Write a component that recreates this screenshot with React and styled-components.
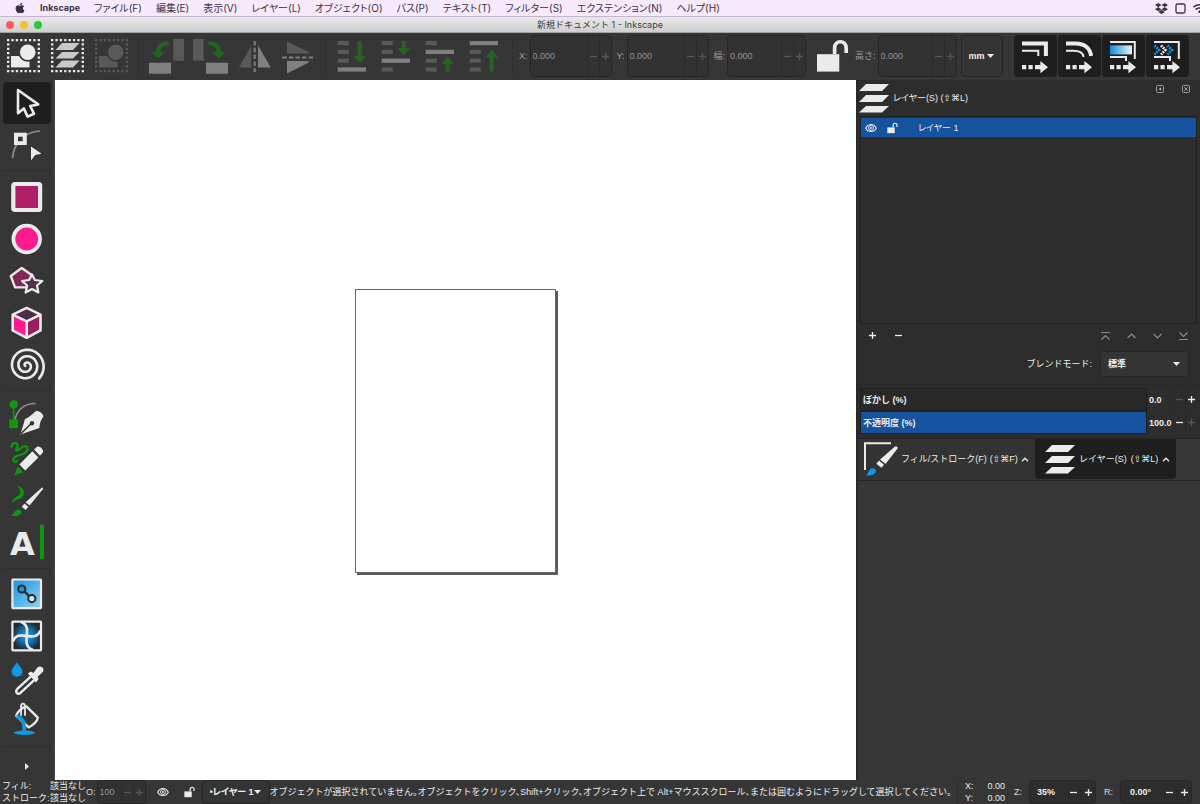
import React, { useState } from 'react'
import styled, { createGlobalStyle } from 'styled-components'
import { FaApple, FaDropbox, FaWifi } from 'react-icons/fa'

const LIGHT = '#ebebeb'
const DIM = '#595959'
const MID = '#808080'
const GREEN = '#0c980f'
const DARK_GREEN = '#24641f'
const PINK = '#ff1b8d'
const BLUE = '#0d99e8'

const GlobalStyle = createGlobalStyle`
  * {
    box-sizing: border-box;
  }

  body {
    margin: 0;
    background: #363636;
    color: #ececec;
    font-family: 'Liberation Sans', 'Noto Sans CJK JP', sans-serif;
    font-size: 9px;
    line-height: 12px;
  }

  button, input, select {
    margin: 0;
    padding: 0;
    border: 0;
    background: none;
    color: inherit;
    font: inherit;
    font-feature-settings: inherit;
  }

  svg {
    display: block;
    flex: none;
    overflow: visible;
  }
`

const Window = styled.div`
  display: flex;
  flex-direction: column;
  min-height: 100vh;
  overflow: hidden;
`

const MenuBar = styled.nav`
  display: flex;
  align-items: center;
  gap: 14px;
  height: 17px;
  padding-left: 14px;
  background: #f7eafd;
  border-bottom: 1px solid #c5b3cf;
  color: #3c3246;
  font-family: Inter, 'Noto Sans CJK JP', sans-serif;
  font-feature-settings: 'palt';
  overflow: hidden;
`

const MenuItem = styled.button`
  font-size: ${({ $app }) => ($app ? '9px' : '10px')};
  font-weight: ${({ $app }) => ($app ? 700 : 400)};
  white-space: nowrap;
`

const MenuExtras = styled.div`
  display: flex;
  align-items: center;
  gap: 7px;
  margin-left: auto;
  margin-right: -6px;
`

const TitleBar = styled.header`
  display: grid;
  grid-template-columns: 1fr auto 1fr;
  align-items: center;
  height: 16px;
  padding: 0 6px;
  background: linear-gradient(#e9e9e9, #cfcfcf);
  border-bottom: 1px solid #a3a3a3;
  color: #404040;
  font-family: Inter, 'Noto Sans CJK JP', sans-serif;
`

const Title = styled.h1`
  margin: 0;
  font-size: 9px;
  font-weight: 400;
`

const Lights = styled.div`
  display: flex;
  gap: 6px;
`

const Light = styled.button`
  width: 8px;
  height: 8px;
  border-radius: 50%;
  background: ${({ $color }) => $color};
`

const Toolbar = styled.div`
  display: flex;
  align-items: center;
  height: 47px;
  padding: 0 0 1px 1px;
  background: #363636;
`

const ToolbarButton = styled.button`
  display: grid;
  place-items: center;
  flex: none;
  width: ${({ $width }) => $width || 44}px;
  height: 42px;
`

const AffectButton = styled(ToolbarButton)`
  width: 43px;
  margin-right: 1px;
  border-radius: 4px;
  background: #1e1e1e;
`

const ToolbarDivider = styled.span`
  flex: none;
  width: 1px;
  height: 40px;
  margin: 0 5px;
  background: #303030;
`

const Field = styled.label`
  display: flex;
  align-items: center;
  gap: 2px;
  margin-left: ${({ $gap = 5 }) => $gap}px;
  color: #9a9a9a;
  white-space: nowrap;
`

const SpinBox = styled.span`
  display: flex;
  align-items: center;
  width: ${({ $width }) => $width}px;
  height: ${({ $low }) => ($low ? '24px' : '42px')};
  border: 1px solid #272727;
  border-radius: 4px;
  background: ${({ $disabled }) => ($disabled ? '#323232' : '#2d2d2d')};
  color: ${({ $disabled }) => ($disabled ? '#949494' : '#f0f0f0')};
  font-weight: ${({ $disabled }) => ($disabled ? 400 : 700)};
`

const SpinInput = styled.input`
  flex: 1;
  min-width: 0;
  padding-left: ${({ $indent }) => $indent || 2}px;
`

const Step = styled.button`
  display: grid;
  place-items: center;
  align-self: stretch;
  flex: none;
  width: ${({ $width }) => $width || 12}px;
  border-left: 1px solid #2b2b2b;
  color: ${({ $off }) => ($off ? '#565656' : '#ececec')};
`

const SelectBox = styled.span`
  display: grid;
  align-items: center;
  flex: none;
  width: ${({ $width }) => $width}px;
  height: ${({ $height }) => $height}px;
  border: 1px solid #252525;
  border-radius: 4px;
  background: #343434;
  color: #f0f0f0;

  select {
    grid-area: 1 / 1;
    width: 100%;
    height: 100%;
    padding-left: 7px;
    appearance: none;
    font-weight: 700;
    font-feature-settings: 'palt';
  }

  svg {
    grid-area: 1 / 1;
    justify-self: end;
    margin-right: 8px;
    pointer-events: none;
  }
`

const Workspace = styled.div`
  display: flex;
  flex: 1;
`

const Toolbox = styled.aside`
  display: flex;
  flex-direction: column;
  align-items: center;
  flex: none;
  width: 55px;
  padding: 2px 1px 0 0;
  border-right: 1px solid #4a4a4a;
`

const Tool = styled.button`
  display: grid;
  place-items: center;
  width: 48px;
  height: 42px;
  border-radius: 4px;
  background: ${({ $active }) => ($active ? '#1e1e1e' : 'none')};
`

const ToolDivider = styled.span`
  width: 48px;
  height: 1px;
  margin: 4px 0 5px;
  background: #2f2f2f;
`

const MoreButton = styled.button`
  display: grid;
  place-items: center;
  width: 48px;
  height: 28px;
`

const Canvas = styled.main`
  display: grid;
  place-items: center;
  flex: 1;
  min-height: 700px;
  padding-top: 2px;
  background: #fff;
`

const Paper = styled.div`
  width: 201px;
  aspect-ratio: 201 / 284;
  border: 1px solid #666;
  background: #fff;
  box-shadow: 2px 2px 0 #5c5c5c;
`

const Dock = styled.aside`
  flex: none;
  width: 344px;
  border-left: 2px solid #292929;
`

const DockPanel = styled.section`
  background: #2d2d2d;
  border-bottom: 1px solid #262626;
`

const DockHeader = styled.header`
  display: flex;
  align-items: center;
  gap: 4px;
  height: 36px;
  padding: 0 10px 0 1px;
`

const DockTitle = styled.h2`
  flex: 1;
  margin: 0;
  font-size: 9px;
  font-weight: 400;
  font-feature-settings: 'palt';
`

const HeaderButtons = styled.div`
  display: flex;
  align-self: flex-start;
  gap: 18px;
  padding-top: 5px;
`

const LayerList = styled.ul`
  height: 208px;
  margin: 0 3px 0 2px;
  padding: 1px 0;
  border: 1px solid #222;
  list-style: none;
`

const LayerRow = styled.li`
  display: flex;
  align-items: center;
  height: 19px;
  padding-left: 4px;
  background: #15539e;
`

const LayerName = styled.span`
  margin-left: 11px;
  font-feature-settings: 'palt';
`

const IconButton = styled.button`
  display: grid;
  place-items: center;
  width: ${({ $width }) => $width || 26}px;
  height: 22px;
`

const ActionRow = styled.div`
  display: flex;
  align-items: center;
  height: 23px;
  padding: 0 4px 0 1px;
`

const Spacer = styled.span`
  flex: 1;
`

const BlendRow = styled.label`
  display: flex;
  align-items: center;
  justify-content: flex-end;
  gap: 8px;
  height: 34px;
  padding-right: 11px;
`

const Scales = styled.div`
  margin-top: 3px;
  padding: 3px 3px 4px 2px;
  border-top: 1px solid #292929;
  font-weight: 700;
`

const ScaleRow = styled.div`
  display: flex;
  align-items: center;
  height: 23px;
`

const ScaleTrack = styled.label`
  display: flex;
  align-items: center;
  flex: 1;
  height: 23px;
  padding-left: 2px;
  border: 1px solid #202020;
  background: ${({ $full }) => ($full ? '#15539e' : '#282828')};
`

const ScaleValue = styled.input`
  width: 26px;
  padding-left: 2px;
`

const Tabs = styled.div`
  display: flex;
  height: 42px;
  border-bottom: 1px solid #262626;
`

const Tab = styled.button`
  display: flex;
  align-items: center;
  gap: ${({ $active }) => ($active ? 4 : 3)}px;
  width: ${({ $active }) => ($active ? 141 : 177)}px;
  height: 40px;
  padding-left: ${({ $active }) => ($active ? 10 : 6)}px;
  border-radius: 0 0 4px 4px;
  background: ${({ $active }) => ($active ? '#1e1e1e' : '#333')};
  white-space: nowrap;
`

const StatusBar = styled.footer`
  display: flex;
  align-items: center;
  height: 24px;
  padding-right: 8px;
  white-space: nowrap;
`

const StyleTable = styled.dl`
  display: grid;
  grid-template-columns: 48px 36px;
  flex: none;
  margin: 0;
  padding-left: 2px;

  dt, dd {
    margin: 0;
  }
`

const Message = styled.output`
  flex: 1;
  min-width: 0;
  overflow: hidden;
  font-feature-settings: 'halt';
`

const Coordinates = styled.dl`
  display: grid;
  grid-template-columns: 14px 26px;
  flex: none;
  margin: 0 9px 0 0;
  padding-left: 7px;
  border-left: 1px solid #2c2c2c;

  dt, dd {
    margin: 0;
  }

  dd {
    text-align: right;
  }
`

const StatusField = styled.label`
  display: flex;
  align-items: center;
  flex: none;
  gap: ${({ $tight }) => ($tight ? 1 : 7)}px;
  margin-right: ${({ $tight }) => ($tight ? 4 : 8)}px;
  color: #dcdcdc;

  &:last-child {
    margin-right: 0;
  }
`

const Keys = styled.kbd`
  font-family: 'Liberation Sans', 'DejaVu Sans', sans-serif;
  font-size: 9px;
`

const Icon = ({ size = 36, children }) => (
  <svg width={size} height={size} viewBox="0 0 36 36" fill="none" aria-hidden="true">{children}</svg>
)

const Minus = () => (
  <svg width="9" height="9" viewBox="0 0 9 9" stroke="currentColor" strokeWidth="1.3"><path d="M1 4.5H8" /></svg>
)

const Plus = () => (
  <svg width="9" height="9" viewBox="0 0 9 9" stroke="currentColor" strokeWidth="1.3"><path d="M1 4.5H8M4.5 1V8" /></svg>
)

const Caret = () => (
  <svg width="7" height="4" viewBox="0 0 7 4" fill="#ececec"><path d="M0 0H7L3.5 4Z" /></svg>
)

const Chevron = () => (
  <svg width="8" height="5" viewBox="0 0 8 5" fill="none" stroke="#ececec" strokeWidth="1.3"><path d="M1 4.2L4 1.2L7 4.2" /></svg>
)

// dotted frame shared by the three select-all buttons
const Dots = ({ color }) => (
  <path d="M2 2.2H35M2 33.2H35M3.2 5.3V31M33.8 5.3V31" stroke={color} strokeWidth="2.3" strokeDasharray="2.3 2.08" />
)

const SelectAllIcon = ({ color = LIGHT }) => (
  <Icon>
    <Dots color={color} />
    <path d="M6 18H24.5V29.4H6Z" fill={color} />
    <circle cx="22.7" cy="14.3" r="9.4" fill="#363636" />
    <circle cx="22.7" cy="14.3" r="7.8" fill={color} />
  </Icon>
)

const SelectLayersIcon = () => (
  <Icon>
    <Dots color={LIGHT} />
    <path d="M13 5H30.5L24 12H6.5ZM13 14H30.5L24 20.6H6.5ZM13 22.6H30.5L24 29.4H6.5Z" fill="#c9c9c9" />
  </Icon>
)

const RotateIcon = ({ flip }) => (
  <Icon>
    <g transform={flip ? 'translate(37 0) scale(-1 1)' : undefined}>
      <path d="M25.3 1H36V22.7H25.3Z" fill={DIM} />
      <path d="M1 24.7H23V35.7H1Z" fill={MID} />
      <path d="M21 3.2C13 3 7.5 7 8 14H3.8L10.2 20.4L17 14H12.4C12.4 9.5 15.5 7.2 21 7Z" fill={DARK_GREEN} />
    </g>
  </Icon>
)

const FlipHorizontalIcon = () => (
  <Icon>
    <path d="M3 29.5H15.4V7.6Z" fill={DIM} />
    <path d="M22 29.5H34.8L22 7.6Z" fill={MID} />
    <path d="M18.7 3V34" stroke={MID} strokeWidth="2" strokeDasharray="4.4 2.4" />
  </Icon>
)

const FlipVerticalIcon = () => (
  <Icon>
    <path d="M7 3.4L28.8 14V15.6H7Z" fill={DIM} />
    <path d="M7 23H28.8V24.4L7 35.4Z" fill={MID} />
    <path d="M2.3 19.4H33.5" stroke={MID} strokeWidth="2" strokeDasharray="4.4 2.2" />
  </Icon>
)

// four stacked bars, one of them full width, and the arrow that points to it
const StackIcon = ({ row, arrow }) => (
  <Icon>
    {[0, 1, 2, 3].map((i) => (
      <rect key={i} x="2.7" y={3 + i * 8.8} width={i === row ? 28.3 : 11} height="4.2" fill={i === row ? MID : DIM} />
    ))}
    <path d={arrow} fill={DARK_GREEN} />
  </Icon>
)

const Padlock = ({ size = 36 }) => (
  <Icon size={size}>
    <path d="M4 16.2H26.3V33.6H4Z" fill={LIGHT} />
    <path d="M21.6 16V10.2C21.6 1.6 33.2 1.6 33.2 10.2V15" stroke={LIGHT} strokeWidth="3.7" />
  </Icon>
)

const MoveArrow = () => (
  <path d="M5 27H9.2V31.2H5ZM11.5 27H15.7V31.2H11.5ZM18 27H23.4V23L31 29.2L23.4 35.2V31.2H18Z" fill={LIGHT} />
)

const ScaleStrokeIcon = () => (
  <Icon>
    <path d="M5 5.4H28.9V18" stroke={LIGHT} strokeWidth="4" />
    <path d="M5 12.7H21.3V18" stroke={LIGHT} strokeWidth="2" />
    <MoveArrow />
  </Icon>
)

const ScaleCornersIcon = () => (
  <Icon>
    <path d="M5 5.4H15C23 5.4 29.4 10 30 18" stroke={LIGHT} strokeWidth="4" />
    <path d="M5 12.7H12C18 12.7 22.2 14.5 22.6 19" stroke={LIGHT} strokeWidth="2" />
    <MoveArrow />
  </Icon>
)

const MoveGradientIcon = () => (
  <Icon>
    <defs>
      <linearGradient id="moveGradient"><stop stopColor="#0a8fe0" /><stop offset="1" stopColor="#f2f2f2" /></linearGradient>
    </defs>
    <path d="M5 4H29.8V21" stroke={LIGHT} strokeWidth="2" />
    <path d="M5 7.4H27V16.4H5Z" fill="url(#moveGradient)" />
    <path d="M5 19H21V23" stroke={LIGHT} strokeWidth="2" />
    <MoveArrow />
  </Icon>
)

const MovePatternIcon = () => (
  <Icon>
    <path d="M5 4H29.8V21" stroke={LIGHT} strokeWidth="2" />
    <path d="M5.5 7.5L10 12L5.5 16.5M18.5 7.5L23 12L18.5 16.5" stroke={BLUE} strokeWidth="2.6" strokeDasharray="1.8 1" />
    <path d="M12 7.5L16.5 12L12 16.5" stroke={LIGHT} strokeWidth="2.6" strokeDasharray="1.8 1" />
    <path d="M5 19H21V23" stroke={LIGHT} strokeWidth="2" />
    <MoveArrow />
  </Icon>
)

const LayersIcon = () => (
  <svg width="30" height="30" viewBox="0 0 30 30" fill={LIGHT} aria-hidden="true">
    <path d="M7 1H30L23 8H0ZM7 12H30L23 19H0ZM7 23H30L23 29.5H0Z" />
  </svg>
)

const FillStrokeIcon = () => (
  <svg width="34" height="34" viewBox="0 0 34 34" fill="none" aria-hidden="true">
    <path d="M1 28V1.2H27" stroke={LIGHT} strokeWidth="2" />
    <path d="M32.5 4.5C34 5 34 6 33.2 7L21.5 22L16 17.5L31 4.6Z" fill={LIGHT} />
    <path d="M15 18.5L20 22.8L17.4 25.8L12.4 21.8Z" fill={LIGHT} />
    <path d="M2 33.5C4.5 31.5 4.5 26.5 8.5 26.2C12 26.2 13 29.5 10.7 31.6C8.5 33.6 5 33.8 2 33.5Z" fill={BLUE} />
  </svg>
)

const Eye = () => (
  <svg width="12" height="12" viewBox="0 0 12 12" fill="none" stroke={LIGHT} aria-hidden="true">
    <path d="M0.7 6.2C3 1.2 9 1.2 11.3 6.2C9 10.6 3 10.6 0.7 6.2Z" strokeWidth="1.1" />
    <circle cx="6" cy="6" r="2.4" strokeWidth="1" />
    <circle cx="6" cy="6" r="0.9" fill={LIGHT} stroke="none" />
  </svg>
)

const ArrowTool = () => (
  <Icon><path d="M9 5V28.3L14.8 23.4L18.6 31.6L25 28.8L21.2 21L29.2 19.4Z" stroke={LIGHT} strokeWidth="2.6" strokeLinejoin="round" /></Icon>
)

const NodeTool = () => (
  <Icon>
    <path d="M31 4C17 5 5 14 3.5 31" stroke="#8c8c8c" strokeWidth="1.7" />
    <path d="M5 5.7H17.8V18H5Z" fill={LIGHT} />
    <path d="M9 9.7H13.7V14.2H9Z" fill="#363636" />
    <path d="M22 19.5L32.5 26.8L26.2 28L22 33.6Z" fill={LIGHT} />
  </Icon>
)

const RectTool = () => (
  <Icon><rect x="4.3" y="5" width="26.8" height="26" rx="1.5" fill="#ad2068" stroke={LIGHT} strokeWidth="4.2" /></Icon>
)

const EllipseTool = () => (
  <Icon><circle cx="17.7" cy="18" r="13.3" fill={PINK} stroke={LIGHT} strokeWidth="3.8" /></Icon>
)

const StarTool = () => (
  <Icon>
    <path d="M12.7 5L23 12.3L19.5 24.3H6L1.8 13Z" fill="#84255a" stroke={LIGHT} strokeWidth="2.3" strokeLinejoin="round" />
    <path d="M23 11.4L25.9 17L33.4 18L28 22.5L29.4 29.5L23 26L16.6 29.5L18.2 22.5L13 18L20.1 17Z" fill="#56304a" stroke={LIGHT} strokeWidth="2.2" strokeLinejoin="round" />
  </Icon>
)

const BoxTool = () => (
  <Icon>
    <path d="M17.7 2.8L31.5 9.6L17.7 16.4L3.7 9.6Z" fill="#4d2c45" />
    <path d="M3.7 9.6L17.7 16.4V32.8L3.7 25.4Z" fill={PINK} />
    <path d="M31.5 9.6L17.7 16.4V32.8L31.5 25.4Z" fill="#9a2160" />
    <path d="M17.7 2.8L31.5 9.6V25.4L17.7 32.8L3.7 25.4V9.6ZM3.7 9.6L17.7 16.4L31.5 9.6M17.7 16.4V32.8" stroke={LIGHT} strokeWidth="2.6" strokeLinejoin="round" />
  </Icon>
)

const spiralPath = () => {
  const start = Math.PI * 0.9
  const end = Math.PI * 6.25
  const points = []
  for (let a = start; a <= end; a += 0.12) {
    const r = 1 + (17.2 * (a - start)) / (end - start)
    points.push(`${(17.2 + r * Math.cos(a)).toFixed(2)} ${(18.6 + r * Math.sin(a)).toFixed(2)}`)
  }
  return `M${points.join('L')}`
}

const SpiralTool = () => (
  <Icon><path d={spiralPath()} stroke={LIGHT} strokeWidth="2.6" strokeLinecap="round" strokeLinejoin="round" /></Icon>
)

const PenTool = () => (
  <Icon>
    <path d="M26.5 4.5C15 4.5 8 11 5.5 22" stroke="#8c8c8c" strokeWidth="1.7" />
    <path d="M4.7 5V24" stroke={GREEN} strokeWidth="1.7" />
    <circle cx="4.7" cy="5.4" r="4.1" fill={GREEN} />
    <path d="M0.3 20.4H9V29.2H0.3Z" fill={GREEN} />
    <path d="M11.4 35.4L16 20C19.5 18.8 23 16 26 12.8L27.6 12C30.5 12 34 14.5 34.4 17.3L33 19.8C31 23 30.6 26 30.4 29Z" fill={LIGHT} />
    <path d="M12 34.6L22 24.8" stroke="#363636" strokeWidth="1.5" />
    <circle cx="23" cy="24.2" r="2.2" fill="#363636" />
  </Icon>
)

const PencilTool = () => (
  <Icon>
    <path d="M2.5 6C2.5 1 10 1 8.5 5.5C7.5 8 6 9.5 8 9.5C11 9 13 4.5 17 5.5C21 7 17 12 13 13.5C9 15 5.5 14.5 4.5 18C4 21 6.5 21.4 8 20" stroke={GREEN} strokeWidth="2.3" strokeLinecap="round" />
    <path d="M10.4 23.4L23.4 10.2L29.4 16.4L16.2 29.4Z" fill={LIGHT} />
    <path d="M25 8.6L28 5.8C30.5 4.4 35.4 8.8 33.8 11.8L31 14.8Z" fill={LIGHT} />
    <path d="M8.6 25.4L14.4 31.2L5.4 34.2Z" fill={GREEN} />
  </Icon>
)

const BrushTool = () => (
  <Icon>
    <path d="M8 2.4C14.5 3.4 17 10.4 13 14.2C10 17 5.5 16 3.2 20.6C2.8 16.2 6.4 14.6 9.4 12.6C12.6 10.2 11.8 5.6 8 2.4Z" fill={GREEN} />
    <path d="M33 4.6C34.2 4.6 34.2 5.8 33.6 6.6L20.6 22.6L16.6 19.2Z" fill={LIGHT} />
    <path d="M15.4 20.4L19.4 23.8L16.6 27L12.8 23.8Z" fill={LIGHT} />
    <path d="M2.4 32.8C5 31.6 5.4 27.2 9 26.8C12.4 26.6 13.6 29.4 11.4 31.2C9 33 6 33.2 2.4 32.8Z" fill={GREEN} />
  </Icon>
)

const TextTool = () => (
  <Icon>
    <text x="1" y="30" fill={LIGHT} fontFamily="DejaVu Sans" fontWeight="700" fontSize="32">A</text>
    <path d="M31 0H35V34H31Z" fill={GREEN} />
  </Icon>
)

const GradientTool = () => (
  <Icon>
    <defs>
      <linearGradient id="toolGradient" x1="0" y1="0" x2="1" y2="1"><stop stopColor="#1494e4" /><stop offset="1" stopColor="#98cff2" /></linearGradient>
    </defs>
    <rect x="3.4" y="2.5" width="28.6" height="28.6" rx="0.5" fill="url(#toolGradient)" stroke={LIGHT} strokeWidth="2.2" />
    <path d="M14 13L22 21" stroke="#2b2b2b" strokeWidth="2.4" />
    <circle cx="12.8" cy="12" r="3.6" fill="#2b8fce" stroke="#2b2b2b" strokeWidth="2" />
    <circle cx="22.8" cy="21.6" r="3.6" fill="#cfe6f5" stroke="#2b2b2b" strokeWidth="2" />
  </Icon>
)

const MeshTool = () => (
  <Icon>
    <defs>
      <radialGradient id="meshGradient"><stop stopColor="#1d9df0" /><stop offset="0.5" stopColor="#1672b0" /><stop offset="1" stopColor="#222a30" /></radialGradient>
    </defs>
    <rect x="3.4" y="2.7" width="28.6" height="28.6" rx="0.5" fill="url(#meshGradient)" stroke={LIGHT} strokeWidth="2.2" />
    <path d="M12 3C20 6 18 13 17.7 17C17.4 21 16 28 24 31M4 22.5C7 14.5 13 16.6 17.7 17C22.4 17.4 28.5 19 31.5 11.5" stroke={LIGHT} strokeWidth="2.6" />
  </Icon>
)

const DropperTool = () => (
  <Icon>
    <path d="M8 1C9.6 4.4 13.4 7 13.4 10.6C13.4 17.4 2.6 17.4 2.6 10.6C2.6 7 6.4 4.4 8 1Z" fill={BLUE} />
    <path d="M22 15.4L8.6 27.6C5 31.4 9 34.6 12 31.4L25.4 18.8" stroke={LIGHT} strokeWidth="2.4" />
    <path d="M18.8 12.6L22 10.4L24.4 12L28.4 6.6C31.5 3.4 36.4 7.4 33.8 11L28.6 15.8L29.6 18L27 21.4Z" fill={LIGHT} />
  </Icon>
)

const BucketTool = () => (
  <Icon>
    <ellipse cx="15.4" cy="29.8" rx="10.6" ry="2.2" fill={BLUE} />
    <path d="M17.4 3.4L28.8 14.6C28.6 18 24 22.4 19.6 24.4L7.2 12.6C8.6 8.6 13 4.4 17.4 3.4Z" stroke={LIGHT} strokeWidth="2.3" strokeLinejoin="round" />
    <path d="M12 12V3.6C12 -0.6 16 0.2 16 3.2V12" stroke={LIGHT} strokeWidth="1.8" strokeLinecap="round" />
    <path d="M7.4 13.6C13 14.4 15.4 18 15.4 29" stroke={BLUE} strokeWidth="3.6" />
  </Icon>
)

const menus = ['ファイル(F)', '編集(E)', '表示(V)', 'レイヤー(L)', 'オブジェクト(O)', 'パス(P)', 'テキスト(T)', 'フィルター(S)', 'エクステンション(N)', 'ヘルプ(H)']

const toolGroups = [
  [['選択', ArrowTool], ['ノード', NodeTool]],
  [['矩形', RectTool], ['円/弧', EllipseTool], ['星形', StarTool], ['3D ボックス', BoxTool], ['らせん', SpiralTool]],
  [['ペン', PenTool], ['鉛筆', PencilTool], ['カリグラフィ', BrushTool], ['テキスト', TextTool]],
  [['グラデーション', GradientTool], ['メッシュ', MeshTool], ['スポイト', DropperTool], ['バケツ', BucketTool]],
]

const SpinField = ({ label, width, gap }) => (
  <Field $gap={gap}>
    {label}
    <SpinBox $width={width} $disabled>
      <SpinInput defaultValue="0.000" disabled />
      <Step $off aria-label="減らす"><Minus /></Step>
      <Step $off aria-label="増やす"><Plus /></Step>
    </SpinBox>
  </Field>
)

const Scale = ({ id, label, value, full }) => (
  <ScaleRow>
    <ScaleTrack htmlFor={id} $full={full}>{label}</ScaleTrack>
    <ScaleValue id={id} defaultValue={value} />
    <Step $off={!full} aria-label="減らす"><Minus /></Step>
    <Step $off={full} aria-label="増やす"><Plus /></Step>
  </ScaleRow>
)

const orderPaths = ['M1 1.5H10M1.5 8.5L5.5 4.5L9.5 8.5', 'M1.5 7L5.5 3L9.5 7', 'M1.5 3L5.5 7L9.5 3', 'M1 8.5H10M1.5 1.5L5.5 5.5L9.5 1.5']
const orderLabels = ['最前面へ', '前面へ', '背面へ', '最背面へ']

const LayersDock = () => (
  <Dock>
    <DockPanel>
      <DockHeader>
        <LayersIcon />
        <DockTitle>レイヤー(S) <Keys>(⇧⌘L)</Keys></DockTitle>
        <HeaderButtons>
          <button aria-label="アイコン化">
            <svg width="8" height="8" viewBox="0 0 8 8" fill="none" stroke="#9c9c9c"><rect x="0.5" y="0.5" width="7" height="7" rx="1" /><path d="M5 2.4V5.6L2.6 4Z" fill="#c4c4c4" stroke="none" /></svg>
          </button>
          <button aria-label="閉じる">
            <svg width="8" height="8" viewBox="0 0 8 8" fill="none" stroke="#9c9c9c"><rect x="0.5" y="0.5" width="7" height="7" rx="1" /><path d="M2.2 2.2L5.8 5.8M5.8 2.2L2.2 5.8" /></svg>
          </button>
        </HeaderButtons>
      </DockHeader>
      <LayerList>
        <LayerRow>
          <IconButton $width={12} aria-label="表示"><Eye /></IconButton>
          <IconButton $width={30} aria-label="ロック"><Padlock size={12} /></IconButton>
          <LayerName>レイヤー 1</LayerName>
        </LayerRow>
      </LayerList>
      <ActionRow>
        <IconButton aria-label="レイヤーを追加"><Plus /></IconButton>
        <IconButton aria-label="レイヤーを削除"><Minus /></IconButton>
        <Spacer />
        {orderPaths.map((d, i) => (
          <IconButton key={d} aria-label={orderLabels[i]}>
            <svg width="11" height="10" viewBox="0 0 11 10" fill="none" stroke="#8a8a8a" strokeWidth="1.2"><path d={d} /></svg>
          </IconButton>
        ))}
      </ActionRow>
      <BlendRow>
        ブレンドモード:
        <SelectBox $width={89} $height={26}>
          <select><option>標準</option></select>
          <Caret />
        </SelectBox>
      </BlendRow>
      <Scales>
        <Scale id="blur" label="ぼかし (%)" value="0.0" />
        <Scale id="opacity" label="不透明度 (%)" value="100.0" full />
      </Scales>
    </DockPanel>
    <Tabs>
      <Tab><FillStrokeIcon />フィル/ストローク(F) <Keys>(⇧⌘F)</Keys><Chevron /></Tab>
      <Tab $active><LayersIcon />レイヤー(S) <Keys>(⇧⌘L)</Keys><Chevron /></Tab>
    </Tabs>
  </Dock>
)

const App = () => {
  const [tool, setTool] = useState('選択')

  return (
    <Window>
      <GlobalStyle />
      <MenuBar>
        <FaApple size={12} />
        <MenuItem $app>Inkscape</MenuItem>
        {menus.map((name) => <MenuItem key={name}>{name}</MenuItem>)}
        <MenuExtras>
          <FaDropbox size={13} />
          <svg width="11" height="11" viewBox="0 0 11 11" fill="none" stroke="currentColor" strokeWidth="1.3"><rect x="1" y="1" width="9" height="9" rx="1.5" /></svg>
          <FaWifi size={13} />
        </MenuExtras>
      </MenuBar>
      <TitleBar>
        <Lights>
          <Light $color="#fc5b57" aria-label="閉じる" />
          <Light $color="#fdbc2f" aria-label="最小化" />
          <Light $color="#2ac840" aria-label="最大化" />
        </Lights>
        <Title>新規ドキュメント 1 - Inkscape</Title>
      </TitleBar>

      <Toolbar>
        <ToolbarButton aria-label="すべて選択"><SelectAllIcon /></ToolbarButton>
        <ToolbarButton aria-label="すべてのレイヤーで選択"><SelectLayersIcon /></ToolbarButton>
        <ToolbarButton aria-label="選択解除"><SelectAllIcon color={DIM} /></ToolbarButton>
        <ToolbarDivider />
        <ToolbarButton aria-label="反時計回りに回転"><RotateIcon /></ToolbarButton>
        <ToolbarButton aria-label="時計回りに回転"><RotateIcon flip /></ToolbarButton>
        <ToolbarButton aria-label="水平に反転"><FlipHorizontalIcon /></ToolbarButton>
        <ToolbarButton aria-label="垂直に反転"><FlipVerticalIcon /></ToolbarButton>
        <ToolbarDivider />
        <ToolbarButton aria-label="最背面へ"><StackIcon row={3} arrow="M22.6 3H26.8V18H31.2L24.7 25L18.2 18H22.6Z" /></ToolbarButton>
        <ToolbarButton aria-label="背面へ"><StackIcon row={2} arrow="M22.6 3H26.8V10H31.2L24.7 17.4L18.2 10H22.6Z" /></ToolbarButton>
        <ToolbarButton aria-label="前面へ"><StackIcon row={1} arrow="M22.6 33.6H26.8V26H31.2L24.7 18.6L18.2 26H22.6Z" /></ToolbarButton>
        <ToolbarButton aria-label="最前面へ"><StackIcon row={0} arrow="M22.6 33.6H26.8V19.6H31.2L24.7 12L18.2 19.6H22.6Z" /></ToolbarButton>
        <ToolbarDivider />
        <SpinField label="X:" width={82} gap={1} />
        <SpinField label="Y:" width={82} />
        <SpinField label="幅:" width={79} />
        <ToolbarButton $width={49} aria-label="縦横比を固定"><Padlock /></ToolbarButton>
        <SpinField label="高さ:" width={79} gap={0} />
        <Field $gap={4}>
          <SelectBox $width={42} $height={42}>
            <select aria-label="単位"><option>mm</option></select>
            <Caret />
          </SelectBox>
        </Field>
        <ToolbarDivider />
        <AffectButton aria-label="ストローク幅を拡大縮小"><ScaleStrokeIcon /></AffectButton>
        <AffectButton aria-label="角の半径を拡大縮小"><ScaleCornersIcon /></AffectButton>
        <AffectButton aria-label="グラデーションを移動"><MoveGradientIcon /></AffectButton>
        <AffectButton aria-label="パターンを移動"><MovePatternIcon /></AffectButton>
      </Toolbar>

      <Workspace>
        <Toolbox>
          {toolGroups.map((group) => (
            <React.Fragment key={group[0][0]}>
              {group.map(([name, ToolIcon]) => (
                <Tool key={name} aria-label={name} $active={tool === name} onClick={() => setTool(name)}>
                  <ToolIcon />
                </Tool>
              ))}
              <ToolDivider />
            </React.Fragment>
          ))}
          <MoreButton aria-label="その他">
            <svg width="4" height="7" viewBox="0 0 4 7" fill={LIGHT}><path d="M0 0L4 3.5L0 7Z" /></svg>
          </MoreButton>
        </Toolbox>
        <Canvas><Paper /></Canvas>
        <LayersDock />
      </Workspace>

      <StatusBar>
        <StyleTable>
          <dt>フィル:</dt><dd>該当なし</dd>
          <dt>ストローク:</dt><dd>該当なし</dd>
        </StyleTable>
        <StatusField $tight>
          O:
          <SpinBox $width={49} $low $disabled>
            <SpinInput defaultValue="100" disabled />
            <Step $off aria-label="減らす"><Minus /></Step>
            <Step $off aria-label="増やす"><Plus /></Step>
          </SpinBox>
        </StatusField>
        <IconButton aria-label="レイヤーを表示"><Eye /></IconButton>
        <IconButton aria-label="レイヤーをロック"><Padlock size={12} /></IconButton>
        <SelectBox $width={68} $height={24}>
          <select aria-label="現在のレイヤー"><option>•レイヤー 1</option></select>
          <Caret />
        </SelectBox>
        <Message>オブジェクトが選択されていません。オブジェクトをクリック、Shift+クリック、オブジェクト上で Alt+マウススクロール、または囲むようにドラッグして選択してください。</Message>
        <Coordinates>
          <dt>X:</dt><dd>0.00</dd>
          <dt>Y:</dt><dd>0.00</dd>
        </Coordinates>
        <StatusField>
          Z:
          <SpinBox $width={67} $low>
            <SpinInput defaultValue="35%" $indent={7} />
            <Step $width={15} aria-label="縮小"><Minus /></Step>
            <Step $width={15} aria-label="拡大"><Plus /></Step>
          </SpinBox>
        </StatusField>
        <StatusField>
          R:
          <SpinBox $width={72} $low>
            <SpinInput defaultValue="0.00°" $indent={9} />
            <Step $width={15} aria-label="左に回転"><Minus /></Step>
            <Step $width={15} aria-label="右に回転"><Plus /></Step>
          </SpinBox>
        </StatusField>
      </StatusBar>
    </Window>
  )
}

export default App
